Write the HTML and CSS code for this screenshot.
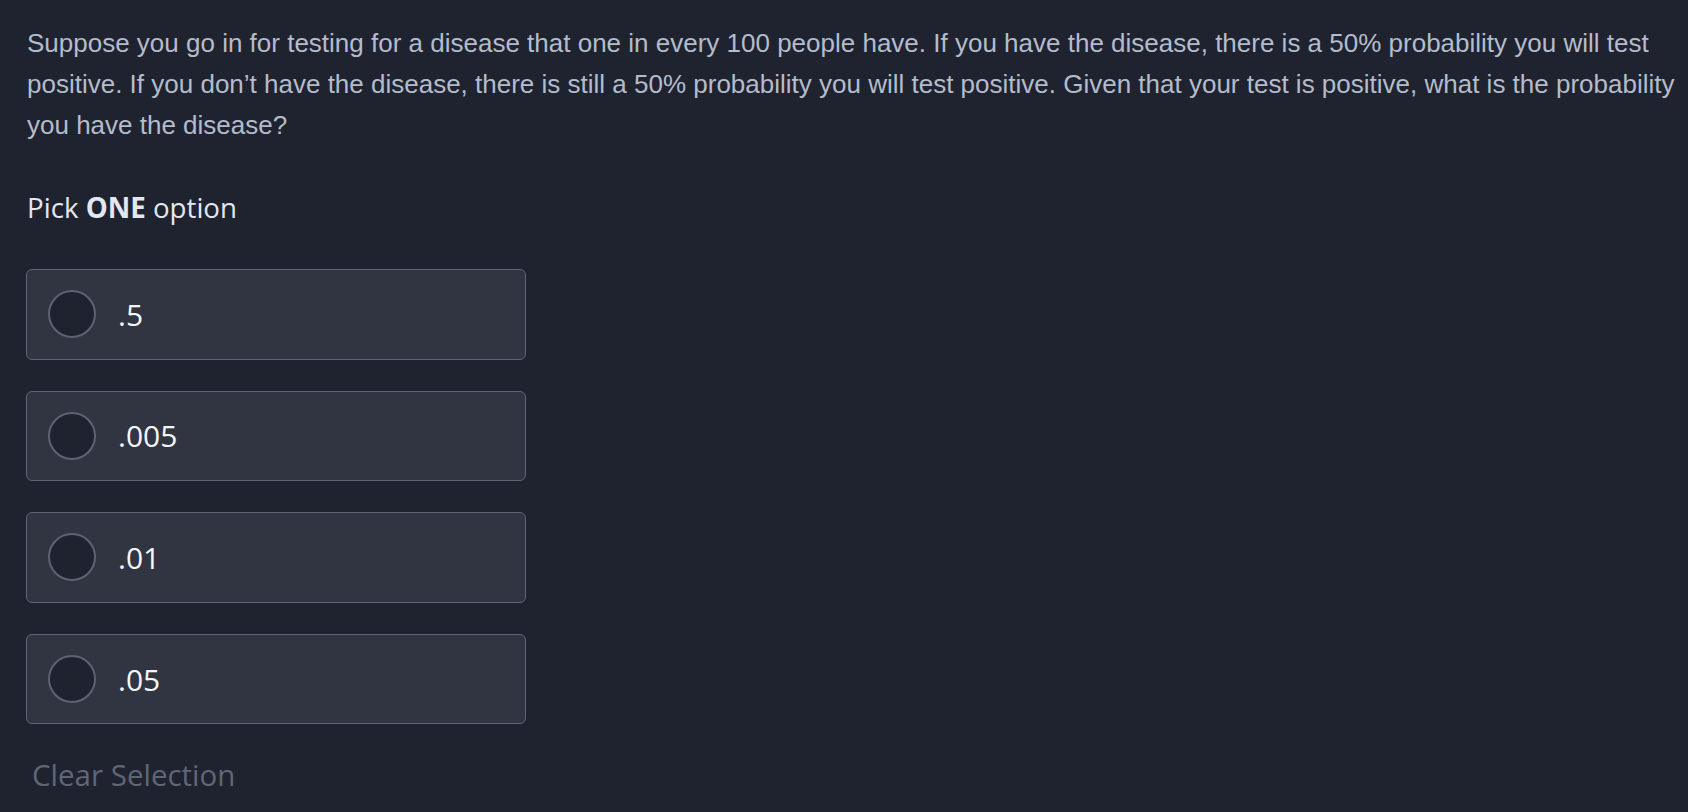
FILE: index.html
```html
<!DOCTYPE html>
<html lang="en">
<head>
<meta charset="utf-8">
<title>Question</title>
<link rel="stylesheet" href="styles.css">
</head>
<body>
<main class="question">
  <p class="prompt">Suppose you go in for testing for a disease that one in every 100 people have. If you have the disease, there is a 50% probability you will test positive. If you don’t have the disease, there is still a 50% probability you will test positive. Given that your test is positive, what is the probability you have the disease?</p>
  <div class="pick">Pick <strong>ONE</strong> option</div>
  <ul class="options">
    <li class="option"><span class="radio"></span><span class="label">.5</span></li>
    <li class="option"><span class="radio"></span><span class="label">.005</span></li>
    <li class="option"><span class="radio"></span><span class="label">.01</span></li>
    <li class="option"><span class="radio"></span><span class="label">.05</span></li>
  </ul>
  <div class="clear">Clear Selection</div>
</main>
</body>
</html>
```

FILE: styles.css
```css
html, body {
  margin: 0;
  padding: 0;
  background: #1f2330;
}
body {
  height: 812px;
  overflow: hidden;
}
.question {
  padding: 23px 6px 0 27px;
}
.prompt {
  margin: 0;
  font-family: "Liberation Sans", Arial, sans-serif;
  font-size: 26px;
  line-height: 41px;
  color: #b4bccb;
}
.pick {
  margin-top: 42px;
  font-family: "Open Sans", sans-serif;
  font-size: 27.7px;
  color: #e2e8f0;
}
.pick strong {
  font-weight: 700;
}
.options {
  list-style: none;
  margin: 43px 0 0 -1px;
  padding: 0;
  display: flex;
  flex-direction: column;
  gap: 31px;
  width: 500px;
}
.option {
  box-sizing: border-box;
  height: 90.6px;
  display: flex;
  align-items: center;
  gap: 22px;
  padding: 0 20px 0 21px;
  background: #313541;
  border: 1.5px solid #5f6574;
  border-radius: 6px;
}
.radio {
  box-sizing: border-box;
  width: 48px;
  height: 48px;
  border-radius: 50%;
  background: #1f2330;
  border: 2px solid #5d6371;
  flex: none;
}
.label {
  font-family: "Open Sans", sans-serif;
  font-size: 30px;
  color: #f4f6fa;
}
.clear {
  margin-top: 30px;
  padding-left: 5px;
  font-family: "Open Sans", sans-serif;
  font-size: 29.5px;
  color: #5f6676;
}
```
